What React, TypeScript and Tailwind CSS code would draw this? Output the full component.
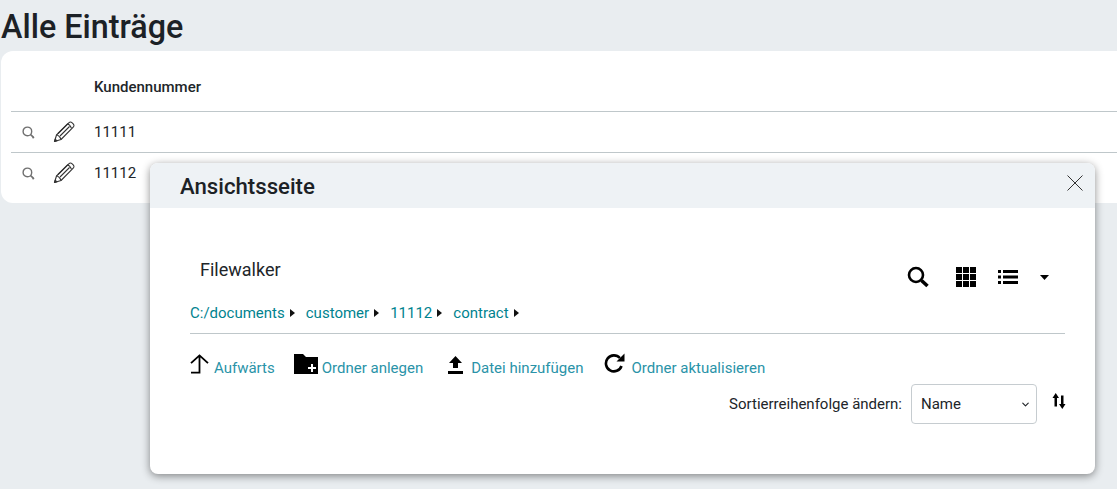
import { ChevronDown } from 'lucide-react';

const linkClass = 'text-[15px] leading-[20px] text-[#2a93a8]';

function SmallSearch() {
  return (
    <svg width="13" height="13" viewBox="0 0 13 13" fill="none" stroke="#707070" strokeWidth="1.4">
      <circle cx="5.4" cy="5.4" r="4.3" />
      <path d="M8.6 8.6l3 2.8M10.500 12.200l1.500-1.300" strokeWidth="1.600" />
    </svg>
  );
}

function Pencil() {
  return (
    <svg width="22" height="22" viewBox="0 0 22 22" fill="none" stroke="#333" strokeWidth="1.1" strokeLinejoin="round">
      <path d="M1.5 20.5l2-6.5L15.8 1.8c1-1 2.4-.9 3.4 0l1 1c1 1 1 2.4 0 3.4L8 18.5z" />
      <path d="M3.5 14c1.8.2 3.6 2 4.5 4.5M5 12.5l9.5-9.5M7 15l9.5-9.5M14 2.8c1.8.4 3.6 2.2 4.4 4.3" />
      <path d="M1.5 20.5l.7-2.4 1.7 1.7z" fill="#333" />
    </svg>
  );
}

function Row({ value }: { value: string }) {
  return (
    <div className="flex h-[41px] items-center border-t border-[#bfc7ca]">
      <div className="flex w-[33px] justify-center pl-[1px]">
        <SmallSearch />
      </div>
      <div className="flex w-[40px] justify-center">
        <Pencil />
      </div>
      <span className="ml-[10px] text-[15px] text-[#212529]">{value}</span>
    </div>
  );
}

function Crumb({ label }: { label: string }) {
  return (
    <span className="flex items-center gap-[5px]">
      <a className="text-[15px] leading-[20px] text-[#00838f]">{label}</a>
      <svg width="5" height="8" viewBox="0 0 5 8" fill="#111">
        <path d="M0 0l5 4-5 4z" />
      </svg>
    </span>
  );
}

export default function App() {
  return (
    <div className="relative h-[489px] w-[1117px] overflow-hidden bg-[#e9edf0] font-['Roboto',sans-serif] text-[#212529]">
      <h1 className="pl-[1px] pt-[6px] pb-[3px] text-[32.3px] font-medium leading-[42px] text-[#1c2126]">Alle Einträge</h1>
      <div className="ml-[1px] h-[152px] rounded-l-[12px] bg-white pl-[10px]">
        <div className="flex h-[60px] items-center pl-[83px] pt-[12px] text-[15px] font-medium">Kundennummer</div>
        <Row value="11111" />
        <Row value="11112" />
      </div>

      <div className="absolute left-[150px] top-[163px] h-[311px] w-[945px] overflow-hidden rounded-[8px] bg-white shadow-[0_2px_8px_rgba(0,0,0,0.45)]">
        <div className="flex h-[45px] items-center justify-between bg-[#eef2f5] pl-[30px] pr-[12px]">
          <h2 className="pt-[2px] text-[22.2px] font-medium text-[#1c2126]">Ansichtsseite</h2>
          <svg width="16" height="16" viewBox="0 0 16 16" stroke="#333" strokeWidth="1" className="mb-[5px]">
            <path d="M.5.5l15 15M15.5.5l-15 15" />
          </svg>
        </div>

        <div className="pl-[40px] pr-[30px] pt-[50px]">
          <div className="flex h-[37px] items-start justify-between pl-[10px]">
            <span className="text-[18px] leading-[24px] text-[#212529]">Filewalker</span>
            <div className="mr-[16px] mt-[7px] flex items-center">
              <svg width="24" height="24" viewBox="0 0 24 24" fill="none" stroke="#000">
                <circle cx="10" cy="10" r="7" strokeWidth="2.6" />
                <path d="M15.5 15.5l6 5.5" strokeWidth="3.6" />
              </svg>
              <svg width="20" height="20" viewBox="0 0 20 20" fill="#000" className="ml-[26px]">
                <path d="M0 0h6v6H0zM7 0h6v6H7zM14 0h6v6h-6zM0 7h6v6H0zM7 7h6v6H7zM14 7h6v6h-6zM0 14h6v6H0zM7 14h6v6H7zM14 14h6v6h-6z" />
              </svg>
              <svg width="20" height="14" viewBox="0 0 20 14" fill="#000" className="ml-[22px]">
                <path d="M0 0h3v3H0zM5 0h15v3H5zM0 5.5h3v3H0zM5 5.5h15v3H5zM0 11h3v3H0zM5 11h15v3H5z" />
              </svg>
              <svg width="9" height="5" viewBox="0 0 9 5" fill="#000" className="ml-[22px]">
                <path d="M0 0h9L4.5 5z" />
              </svg>
            </div>
          </div>

          <div className="flex h-[39px] items-start gap-[11px] border-b border-[#bfc7ca] pt-[8px]">
            <Crumb label="C:/documents" />
            <Crumb label="customer" />
            <Crumb label="11112" />
            <Crumb label="contract" />
          </div>

          <div className="mt-[17px] flex h-[27px] items-end">
            <span className="flex items-end">
              <svg width="20" height="20" viewBox="0 0 20 22" fill="none" stroke="#000" strokeWidth="1.8" preserveAspectRatio="none" className="mb-[4px]">
                <path d="M1 10l8.5-8.5L18 10M9.500 2v18.500H1" />
              </svg>
              <a className={`${linkClass} ml-[4px]`}>Aufwärts</a>
            </span>
            <span className="ml-[19px] flex items-end">
              <svg width="24" height="20" viewBox="0 0 24 20" fill="#000" className="mb-[4px]">
                <path d="M0 0h9l3 3h12v17H0z" />
                <path d="M17 10h2v3h3v2h-3v3h-2v-3h-3v-2h3z" fill="#fff" />
              </svg>
              <a className={`${linkClass} ml-[4px]`}>Ordner anlegen</a>
            </span>
            <span className="ml-[25px] flex items-end">
              <svg width="15" height="18" viewBox="0 0 15 18" fill="#000" className="mb-[4px]">
                <path d="M7.5 0L14 7H10v5H5V7H1zM0 15h15v3H0z" />
              </svg>
              <a className={`${linkClass} ml-[8px]`}>Datei hinzufügen</a>
            </span>
            <span className="ml-[21px] flex items-end">
              <svg width="21" height="21" viewBox="0 0 21 21" fill="none" className="mb-[4px]">
                <path d="M17.5 13a8 8 0 1 1-1.6-8" stroke="#000" strokeWidth="2.6" />
                <path d="M20.5 0.5v8h-8z" fill="#000" />
              </svg>
              <a className={`${linkClass} ml-[6px]`}>Ordner aktualisieren</a>
            </span>
          </div>

          <div className="mt-[6px] flex items-start justify-end">
            <span className="mr-[9px] mt-[10px] text-[15px] leading-[20px]">Sortierreihenfolge ändern:</span>
            <div className="flex h-[40px] w-[126px] items-center justify-between rounded-[4px] border border-[#c6ccd0] pl-[9px] pr-[5px] text-[15px]">
              <span>Name</span>
              <ChevronDown size={11} strokeWidth={2.5} />
            </div>
            <svg width="14" height="16" viewBox="0 0 13 16" fill="#000" className="ml-[15px] mr-[-1px] mt-[9px]">
              <path d="M3.200 0l3.300 5H4.500v8.500H2V5H0zM9.800 16l3.200-5h-2V2.500H8.500V11H6.500z" />
            </svg>
          </div>
        </div>
      </div>
    </div>
  );
}
